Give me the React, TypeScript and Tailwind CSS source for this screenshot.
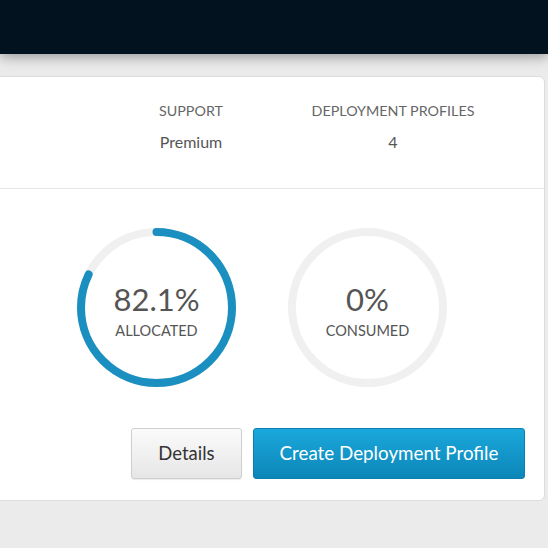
import React from "react";

function Ring({ pct, value, label }: { pct: number; value: string; label: string }) {
  const size = 159;
  const sw = 8;
  const r = (size - sw) / 2;
  const c = 2 * Math.PI * r;
  return (
    <div className="relative w-[159px] h-[159px]">
      <svg width={size} height={size} className="absolute inset-0 -rotate-90">
        <circle cx={size / 2} cy={size / 2} r={r} fill="none" stroke="#f0f0f0" strokeWidth={sw} />
        {pct > 0 && (
          <circle
            cx={size / 2}
            cy={size / 2}
            r={r}
            fill="none"
            stroke="#1a8fc0"
            strokeWidth={sw}
            strokeLinecap="round"
            strokeDasharray={`${(pct / 100) * c} ${c}`}
          />
        )}
      </svg>
      <div className="absolute inset-0 flex flex-col items-center justify-center pt-[6px]">
        <div className="text-[31px] leading-[34px] text-[#555555]">{value}</div>
        <div className="text-[14.5px] leading-[18px] text-[#555555] mt-[6px]">{label}</div>
      </div>
    </div>
  );
}

export default function App() {
  return (
    <div
      className="w-[548px] h-[548px] bg-[#ebebeb] overflow-hidden flex flex-col"
      style={{ fontFamily: "Lato, 'Open Sans', sans-serif" }}
    >
      <div className="h-[54px] bg-[#02131f] shadow-[0_3px_12px_rgba(0,0,0,0.35)] relative z-10 shrink-0" />
      <div className="mt-[22px] ml-[-10px] mr-[3px] bg-white border border-[#dcdcdc] rounded-[6px] flex flex-col">
        <div className="h-[111px] flex justify-end pr-[61px] pt-[24px]">
          <div className="w-[128px] flex flex-col items-center">
            <div className="text-[14.3px] leading-[20px] text-[#666666]">SUPPORT</div>
            <div className="text-[16px] leading-[20px] text-[#555555] mt-[11px]">Premium</div>
          </div>
          <div className="w-[180px] flex flex-col items-center ml-[48px]">
            <div className="text-[14.3px] leading-[20px] text-[#666666]">DEPLOYMENT PROFILES</div>
            <div className="text-[16px] leading-[20px] text-[#555555] mt-[11px]">4</div>
          </div>
        </div>
        <div className="border-t border-[#e6e6e6] pt-[39px] pl-[86px] pr-[19px] pb-[21px] flex flex-col">
          <div className="flex gap-[52px]">
            <Ring pct={82.1} value="82.1%" label="ALLOCATED" />
            <Ring pct={0} value="0%" label="CONSUMED" />
          </div>
          <div className="flex justify-end gap-[11px] mt-[41px]">
            <button className="w-[111px] h-[51px] rounded-[3px] border border-[#cfcfcf] bg-gradient-to-b from-[#fbfbfb] to-[#e6e6e6] text-[18.5px] text-[#333333] shadow-[0_1px_1px_rgba(0,0,0,0.08)]">
              Details
            </button>
            <button className="w-[272px] h-[51px] rounded-[3px] border border-[#0d7fae] bg-gradient-to-b from-[#1aa8dc] to-[#0d86b8] text-[18.8px] text-white">
              Create Deployment Profile
            </button>
          </div>
        </div>
      </div>
    </div>
  );
}
